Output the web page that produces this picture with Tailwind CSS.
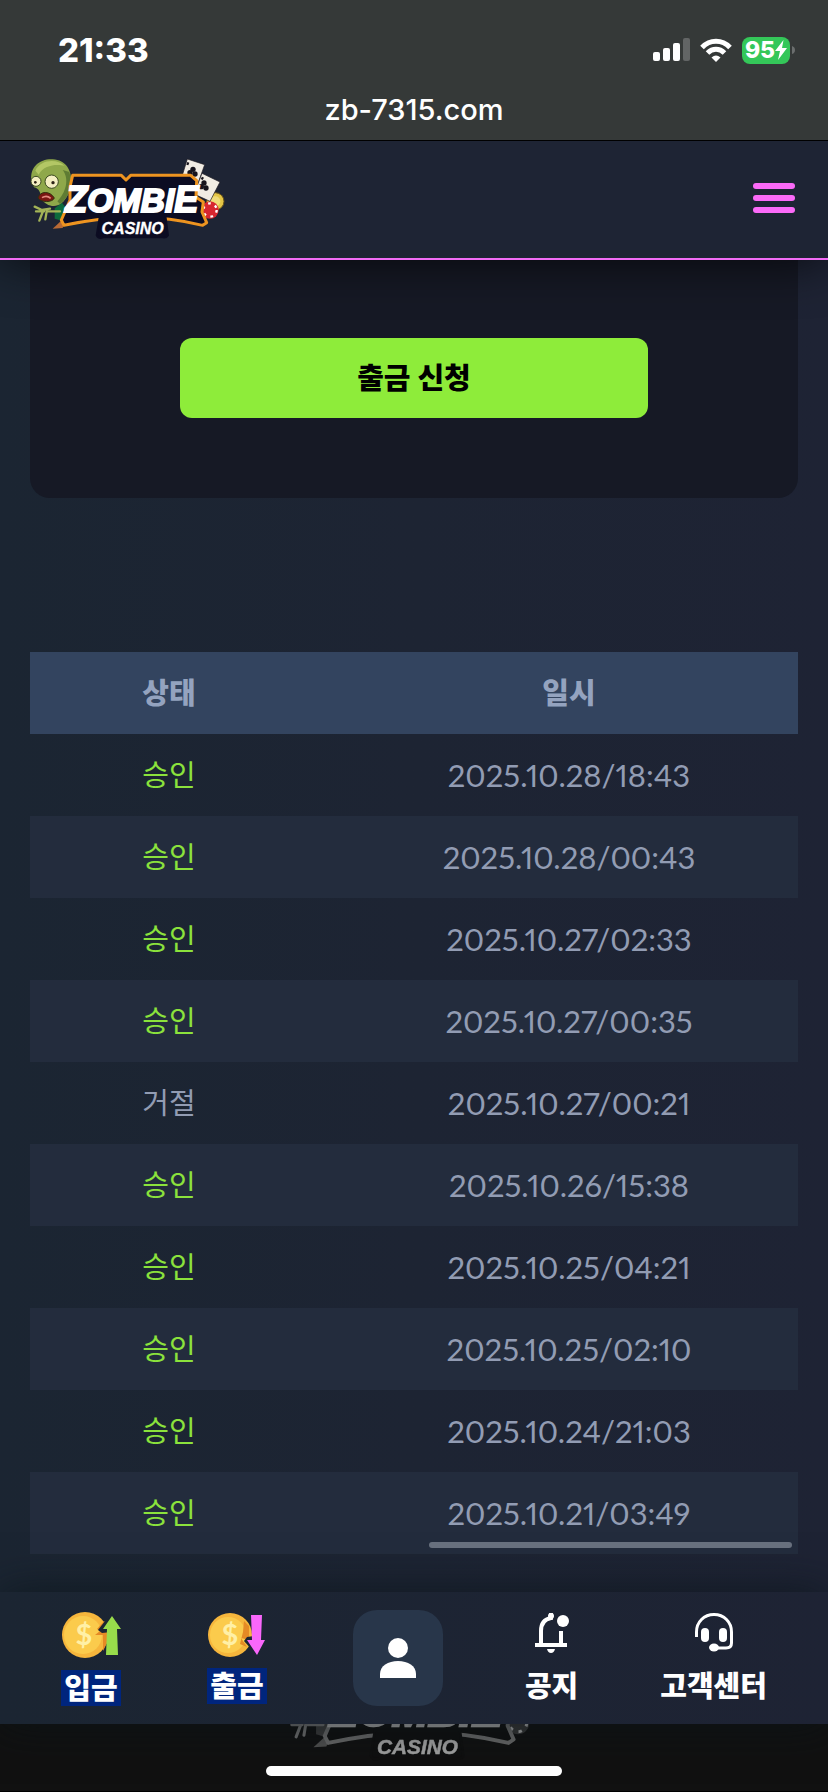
<!DOCTYPE html>
<html lang="ko">
<head>
    <meta charset="UTF-8">
    <meta name="viewport" content="width=device-width, initial-scale=1.0">
    <title>ZOMBIE CASINO - 출금</title>
    <script src="https://cdn.jsdelivr.net/npm/@tailwindcss/browser@4"></script>
</head>
<body class="bg-[#1d2433] font-[Lato,'Noto_Sans_CJK_KR',sans-serif]">
    <div class="min-h-screen flex flex-col bg-linear-to-r from-[#1b2532] via-[#1d2433] to-[#1e2334]">

        <!-- 상태 표시줄 -->
        <div class="relative z-20 bg-[#353938] text-white border-b border-black font-[Inter,sans-serif]">
            <div class="flex items-center justify-between pt-7 pl-[58px] pr-[33px]">
                <span class="text-[33px] leading-[44px] font-extrabold">21:33</span>
                <div class="flex items-center gap-[10px]">
                    <svg class="w-[37px] h-6" viewBox="0 0 37 24" fill="#fff">
                        <rect x="0" y="14" width="7" height="9" rx="2"/>
                        <rect x="10" y="10" width="7" height="13" rx="2"/>
                        <rect x="20" y="5" width="7" height="18" rx="2"/>
                        <rect x="30" y="0" width="7" height="23" rx="2" fill="#626565"/>
                    </svg>
                    <svg class="w-8 h-6" viewBox="0 0 32 24" fill="none" stroke="#fff" stroke-width="5">
                        <path d="M2 9.500C10 1.200 22 1.200 30 9.500"/>
                        <path d="M7.500 15C12.500 10 19.500 10 24.500 15"/>
                        <path d="M11.500 19.500Q16 15.500 20.500 19.500L16 24Z" fill="#fff" stroke="none"/>
                    </svg>
                    <div class="flex items-center gap-[2px]">
                        <div class="flex items-center justify-center w-12 h-[27px] rounded-lg bg-[#34c759]">
                            <span class="text-[23px] leading-[27px] font-extrabold">95</span>
                            <svg class="w-3 h-5" viewBox="0 0 12 20" fill="#fff"><path d="M8.500 0L0 11H5L3 20L12 8H7Z"/></svg>
                        </div>
                        <svg class="w-[3px] h-2" viewBox="0 0 3 8"><path d="M0 0Q3 1 3 4T0 8Z" fill="#6b6e6e"/></svg>
                    </div>
                </div>
            </div>
            <p class="pt-5 pb-3 text-center text-[29px] leading-9 font-medium">zb-7315.com</p>
        </div>

        <!-- 헤더 -->
        <header class="relative z-10 flex items-center justify-between h-[119px] pl-5 pr-[33px] bg-[#1e2434] border-b-2 border-[#f26cf5] shadow-[0_0_50px_rgba(0,0,0,0.75)]">
            <a href="/" aria-label="ZOMBIE CASINO">
                <svg class="w-[220px] h-[100px]" viewBox="0 0 660 300">
                    <g id="logo">
                        <!-- 좀비 -->
                        <path d="M104 175L126 158L150 190L132 214L104 206Z" fill="#0d6b3c"/>
                        <path d="M34 90C30 50 60 26 98 28C138 30 156 62 153 96C151 124 140 148 124 160C104 176 76 166 64 146C62 128 58 116 42 112Z" fill="#8fa84a"/>
                        <path d="M46 62C60 30 110 24 134 48C112 42 72 44 56 74Z" fill="#b3c765"/>
                        <path d="M128 60C150 88 136 130 112 154L120 162C150 142 158 100 148 66Z" fill="#5f7c33"/>
                        <circle cx="48" cy="94" r="15" fill="#f4efc2" stroke="#3b4a20" stroke-width="3"/>
                        <circle cx="95" cy="95" r="20" fill="#f4efc2" stroke="#3b4a20" stroke-width="3"/>
                        <circle cx="46" cy="97" r="4" fill="#2c2216"/>
                        <circle cx="99" cy="98" r="5" fill="#2c2216"/>
                        <path d="M54 144C60 122 90 122 103 144C98 158 62 158 54 144Z" fill="#7a1712" stroke="#31300f" stroke-width="3"/>
                        <path d="M66 143Q80 134 92 145" fill="none" stroke="#e58b80" stroke-width="5"/>
                        <path d="M44 170L66 180L90 176M48 184L72 184M58 212L68 186M76 208L80 184L120 184" fill="none" stroke="#a3b457" stroke-width="7" stroke-linecap="round"/>
                        <path d="M98 236L122 214L132 222L128 234Z" fill="#b96a35"/>
                        <!-- 카드와 칩 -->
                        <circle cx="586" cy="154" r="26" fill="#e4c546" stroke="#6b5417" stroke-width="3"/>
                        <circle cx="586" cy="154" r="15" fill="#f0dc78"/>
                        <circle cx="570" cy="180" r="26" fill="#d8262f"/>
                        <circle cx="570" cy="180" r="20" fill="none" stroke="#fff" stroke-width="7" stroke-dasharray="8 14"/>
                        <path d="M502 27L554 44L532 106L482 92Z" fill="#f1ece3" stroke="#1a1720" stroke-width="2"/>
                        <path d="M546 70L600 96L570 154L522 132Z" fill="#f1ece3" stroke="#1a1720" stroke-width="2"/>
                        <g fill="#17141c">
                            <circle cx="519" cy="58" r="8"/><circle cx="510" cy="68" r="8"/><circle cx="525" cy="72" r="8"/>
                            <circle cx="552" cy="99" r="8"/><circle cx="544" cy="110" r="8"/><circle cx="558" cy="114" r="8"/>
                            <path d="M502 36l6 2l-3 8l-6-2zM546 80l6 3l-4 7l-6-3z"/>
                        </g>
                        <!-- 로고 판 -->
                        <path d="M158 76L304 76L318 90L332 76L512 76L530 92L528 142L550 156L546 186L560 218L548 226Q440 200 338 202T132 226L124 210L150 150L150 110Z" fill="#0c0c22" stroke="#ee9420" stroke-width="9" stroke-linejoin="round"/>
                        <path d="M240 196H436L444 256Q440 264 428 262H250Q236 268 230 256Z" fill="#0c0c22" stroke="#0c0c22" stroke-width="6" stroke-linejoin="round"/>
                        <g fill="#fff" font-family="'Liberation Sans',sans-serif" font-weight="bold" font-style="italic" text-anchor="middle">
                            <text x="335" y="186" font-size="100" stroke="#fff" stroke-width="6"><tspan font-size="108">Z</tspan>OMBI<tspan font-size="108">E</tspan></text>
                            <text x="338" y="252" font-size="48" stroke="#fff" stroke-width="1">CASINO</text>
                        </g>
                    </g>
                </svg>
            </a>
            <button type="button" aria-label="메뉴" class="flex flex-col gap-[6px] w-[42px] pb-1">
                <span class="h-[6px] w-full rounded-full bg-[#fb6af8]"></span>
                <span class="h-[6px] w-full rounded-full bg-[#fb6af8]"></span>
                <span class="h-[6px] w-full rounded-full bg-[#fb6af8]"></span>
            </button>
        </header>

        <!-- 본문 -->
        <main class="flex-1 px-[30px] pb-[38px]">
            <section class="flex justify-center rounded-b-[20px] bg-[#161925] px-[150px] pt-[78px] pb-20">
                <button type="button" class="w-full h-20 rounded-xl bg-[#8eec3a] text-black text-[29px] font-black">출금 신청</button>
            </section>

            <div class="relative mt-[154px]">
                <table class="w-full table-fixed text-center text-[31px] leading-[42px] text-[#929cb3]">
                    <thead>
                        <tr class="bg-[#33445f] text-[29px] text-[#94a3bf]">
                            <th class="w-[278px] py-5 font-black">상태</th>
                            <th class="py-5 pl-8 font-black">일시</th>
                        </tr>
                    </thead>
                    <tbody id="history"></tbody>
                </table>
                <div class="absolute bottom-[6px] right-[6px] w-[363px] h-[6px] rounded-full bg-[#69717f]"></div>
            </div>
        </main>

        <!-- 하단 메뉴 -->
        <nav class="relative z-10 flex items-center justify-between px-[61px] py-[18px] bg-linear-to-r from-[#1b2532] to-[#1e2334] text-white text-[29px] leading-9 font-black shadow-[0_0_40px_rgba(10,20,24,0.7)]">
            <a href="/deposit" class="flex flex-col items-center gap-[11px] mr-1">
                <svg class="w-[60px] h-12" viewBox="0 0 60 48">
                    <circle cx="24" cy="24" r="23" fill="#f6b63c"/>
                    <circle cx="22" cy="24" r="19" fill="#fbcb4c"/>
                    <path d="M43 10L36 18L39 20L34 24H42V40L47 30V14Z" fill="#e58a25"/>
                    <path d="M44 10L37 19L41 22L60 20V4Z" fill="#1c2533"/>
                    <text x="23" y="34" font-size="29" font-family="Lato,sans-serif" text-anchor="middle" font-weight="bold" fill="#fff0a6">$</text>
                    <path d="M51 5L60 18H56L57 44H45L46 18H42Z" fill="#98dc4b"/>
                </svg>
                <span class="px-[3px] bg-[#00257d]">입금</span>
            </a>
            <a href="/withdraw" class="flex flex-col items-center gap-[11px]">
                <svg class="w-[60px] h-[45px]" viewBox="0 0 60 45">
                    <circle cx="23" cy="23" r="22" fill="#f6b63c"/>
                    <circle cx="21" cy="23" r="18" fill="#fbcb4c"/>
                    <path d="M37 9L42 14V28L34 26L40 35L33 32L36 20Z" fill="#e58a25"/>
                    <path d="M40 25L37 29L45 38L60 36V22Z" fill="#1c2533"/>
                    <text x="23" y="33" font-size="29" font-family="Lato,sans-serif" text-anchor="middle" font-weight="bold" fill="#fff0a6">$</text>
                    <path d="M44 3H55L54 28H58L50 43L40 28H45Z" fill="#f967fb"/>
                </svg>
                <span class="px-[3px] bg-[#00257d]">출금</span>
            </a>
            <a href="/mypage" aria-label="내 정보" class="flex items-center justify-center w-[90px] h-24 ml-1 rounded-3xl bg-[#28364a]">
                <svg class="w-9 h-10" viewBox="0 0 36 40" fill="#fff">
                    <circle cx="18" cy="10" r="10"/>
                    <path d="M0 40V36C0 28 8 23 18 23S36 28 36 36V40Z"/>
                </svg>
            </a>
            <a href="/notice" class="flex flex-col items-center gap-[15px]">
                <svg class="w-[34px] h-10" viewBox="0 0 34 40" fill="none" stroke="#fff" stroke-width="4">
                    <path d="M0 32H32M6 32V18C6 10 10 6 16 5V0M26 18V32"/>
                    <circle cx="28" cy="8" r="6" fill="#fff" stroke="none"/>
                    <path d="M12 36H20Q19 40 16 40T12 36Z" fill="#fff" stroke="none"/>
                    <circle cx="16" cy="3" r="3" fill="#fff" stroke="none"/>
                </svg>
                <span>공지</span>
            </a>
            <a href="/support" class="flex flex-col items-center gap-[15px]">
                <svg class="w-[38px] h-10" viewBox="0 0 38 40" fill="none" stroke="#fff" stroke-width="3">
                    <path d="M1.500 24V19C1.500 9 9 1.500 19 1.500S36.500 9 36.500 19V30Q36.500 35 31 35H19"/>
                    <rect x="6" y="15" width="8" height="14" rx="4" fill="#fff" stroke="none"/>
                    <rect x="24" y="15" width="8" height="14" rx="4" fill="#fff" stroke="none"/>
                    <ellipse cx="19" cy="34.500" rx="5" ry="4" fill="#fff" stroke="none"/>
                </svg>
                <span>고객센터</span>
            </a>
        </nav>

        <!-- 푸터 -->
        <footer class="relative flex items-end justify-center h-[68px] pb-4 overflow-hidden bg-[#111111] border-b border-black">
            <svg class="shrink-0 w-[286px] h-[130px] grayscale opacity-60" viewBox="0 0 660 300" aria-hidden="true"><use href="#logo"/></svg>
            <div class="absolute bottom-[15px] w-[296px] h-[10px] rounded-full bg-white"></div>
        </footer>
    </div>

    <script>
        // 출금 내역
        const rows = [
            ['승인', '2025.10.28/18:43'],
            ['승인', '2025.10.28/00:43'],
            ['승인', '2025.10.27/02:33'],
            ['승인', '2025.10.27/00:35'],
            ['거절', '2025.10.27/00:21'],
            ['승인', '2025.10.26/15:38'],
            ['승인', '2025.10.25/04:21'],
            ['승인', '2025.10.25/02:10'],
            ['승인', '2025.10.24/21:03'],
            ['승인', '2025.10.21/03:49'],
        ];

        const tbody = document.getElementById('history');
        rows.forEach(([status, date]) => {
            const tr = document.createElement('tr');
            tr.className = 'even:bg-[#232c3d]';
            const color = status === '승인' ? 'text-[#8be23c]' : 'text-[#929cb3]';
            tr.innerHTML = `
                <td class="py-5 text-[29px] ${color}">${status}</td>
                <td class="py-5 pl-8 proportional-nums">${date}</td>
            `;
            tbody.appendChild(tr);
        });
    </script>
</body>
</html>
